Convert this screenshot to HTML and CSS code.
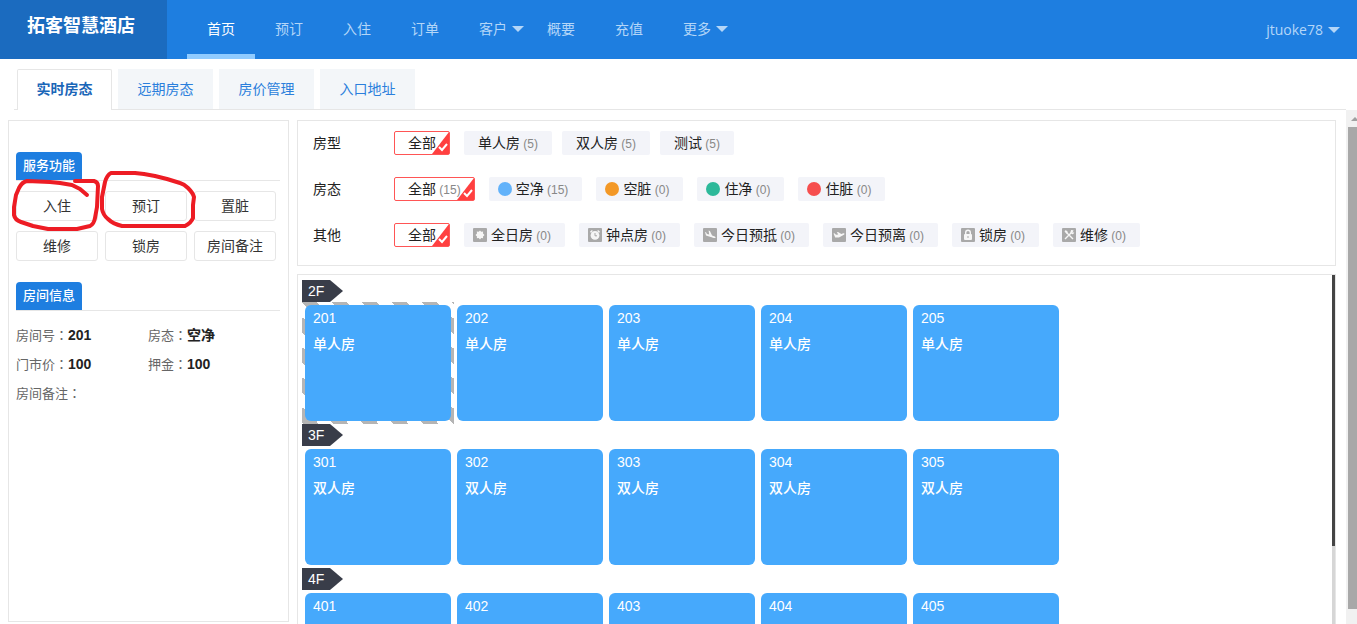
FILE: index.html
```html
<!DOCTYPE html>
<html lang="zh-CN">
<head>
<meta charset="utf-8">
<title>拓客智慧酒店</title>
<link rel="stylesheet" href="styles.css">
</head>
<body>
<header class="topbar">
  <h1 class="brand">拓客智慧酒店</h1>
  <nav class="nav">
    <a class="nav-item active" href="#">首页</a>
    <a class="nav-item" href="#">预订</a>
    <a class="nav-item" href="#">入住</a>
    <a class="nav-item" href="#">订单</a>
    <a class="nav-item has-menu" href="#">客户<span class="caret"></span></a>
    <a class="nav-item" href="#">概要</a>
    <a class="nav-item" href="#">充值</a>
    <a class="nav-item has-menu" href="#">更多<span class="caret"></span></a>
  </nav>
  <a class="user" href="#">jtuoke78<span class="caret"></span></a>
</header>

<nav class="tabs">
  <a class="tab active" href="#">实时房态</a>
  <a class="tab" href="#">远期房态</a>
  <a class="tab" href="#">房价管理</a>
  <a class="tab" href="#">入口地址</a>
</nav>

<div class="page">
  <aside class="sidebar">
    <section>
      <div class="section-head"><h2>服务功能</h2></div>
      <div class="actions">
        <button>入住</button>
        <button>预订</button>
        <button>置脏</button>
        <button>维修</button>
        <button>锁房</button>
        <button>房间备注</button>
      </div>
    </section>
    <section>
      <div class="section-head"><h2>房间信息</h2></div>
      <div class="info">
        <p>房间号<span class="colon" lang="zh-TW">：</span><b>201</b></p>
        <p>房态<span class="colon" lang="zh-TW">：</span><b>空净</b></p>
        <p>门市价<span class="colon" lang="zh-TW">：</span><b>100</b></p>
        <p>押金<span class="colon" lang="zh-TW">：</span><b>100</b></p>
        <p>房间备注<span class="colon" lang="zh-TW">：</span></p>
      </div>
    </section>
  </aside>

  <main class="content">
    <section class="filters">
      <div class="filter-row types">
        <span class="filter-label">房型</span>
        <div class="chips">
          <button class="chip selected">全部<svg class="tick" viewBox="0 0 17 22"><path class="corner" d="M17 0V22H0Z"/><path class="mark" d="M7 15l3 3 5-6"/></svg></button>
          <button class="chip">单人房<small> (5)</small></button>
          <button class="chip">双人房<small> (5)</small></button>
          <button class="chip">测试<small> (5)</small></button>
        </div>
      </div>
      <div class="filter-row">
        <span class="filter-label">房态</span>
        <div class="chips">
          <button class="chip selected">全部<small> (15)</small><svg class="tick" viewBox="0 0 17 22"><path class="corner" d="M17 0V22H0Z"/><path class="mark" d="M7 15l3 3 5-6"/></svg></button>
          <button class="chip with-icon"><i class="dot blue"></i><span>空净<small> (15)</small></span></button>
          <button class="chip with-icon"><i class="dot orange"></i><span>空脏<small> (0)</small></span></button>
          <button class="chip with-icon"><i class="dot green"></i><span>住净<small> (0)</small></span></button>
          <button class="chip with-icon"><i class="dot red"></i><span>住脏<small> (0)</small></span></button>
        </div>
      </div>
      <div class="filter-row">
        <span class="filter-label">其他</span>
        <div class="chips">
          <button class="chip selected">全部<svg class="tick" viewBox="0 0 17 22"><path class="corner" d="M17 0V22H0Z"/><path class="mark" d="M7 15l3 3 5-6"/></svg></button>
          <button class="chip with-icon"><svg class="icon" viewBox="0 0 14 14"><rect width="14" height="14" rx="1"/><path class="w" d="M7 2.500l1.200 1.300 1.900-.2-.1 1.900L11.500 7l-1.500 1.400.1 1.900-1.900-.2L7 11.500l-1.300-1.400-1.900.2.2-1.900L2.500 7l1.500-1.500-.2-1.900 1.900.2z"/></svg><span>全日房<small> (0)</small></span></button>
          <button class="chip with-icon"><svg class="icon" viewBox="0 0 14 14"><rect width="14" height="14" rx="1"/><circle class="w" cx="7" cy="7.4" r="4.4"/><path class="wl" d="M2.400 4.200l2-1.800M11.600 4.200l-2-1.800"/><path class="gl" d="M7 5v2.800h2"/></svg><span>钟点房<small> (0)</small></span></button>
          <button class="chip with-icon"><svg class="icon" viewBox="0 0 14 14"><rect width="14" height="14" rx="1"/><path class="w" d="M2 4l1 .3 1 1.600 2.200.7L5.600 2.600l1.300.4 2.200 4.400 2.700 1c1 .5 1.100 1.700-.1 1.700-.9 0-2.700-.6-4-1L3 7.500z"/></svg><span>今日预抵<small> (0)</small></span></button>
          <button class="chip with-icon"><svg class="icon" viewBox="0 0 14 14"><rect width="14" height="14" rx="1"/><path class="w" d="M1.500 5.500l1-.2 1.500 1.500 2.300-.3L4.800 4.200l1.300-.2 3.200 2 2-.8c1.300-.3 1.800.9.6 1.500L7 9.400H3.200z"/></svg><span>今日预离<small> (0)</small></span></button>
          <button class="chip with-icon"><svg class="icon" viewBox="0 0 14 14"><rect width="14" height="14" rx="1"/><rect class="w" x="3" y="6" width="8" height="6" rx="1"/><path class="wl" d="M4.700 6V4.500a2.300 2.300 0 0 1 4.600 0V6"/><path class="gl" d="M7 8v2"/></svg><span>锁房<small> (0)</small></span></button>
          <button class="chip with-icon"><svg class="icon" viewBox="0 0 14 14"><rect width="14" height="14" rx="1"/><path class="wl" d="M4 4l7 7M10.500 3.500L3 11"/><path class="w" d="M2.500 3.200l.9-.9 1.900.7.4 1.900-1.200.8zM9 2.300c1-.4 2-.1 2.700.5L10.300 4.200l.4.700 1.400-.8c.2 1.300-.7 2.300-2.100 2.100L8.300 4.500z"/></svg><span>维修<small> (0)</small></span></button>
        </div>
      </div>
    </section>

    <section class="rooms">
      <div class="floors">
        <h3 class="floor">2F</h3>
        <div class="floor-rooms">
          <div class="cell selected"><button class="room">201<br>单人房</button></div>
          <div class="cell"><button class="room">202<br>单人房</button></div>
          <div class="cell"><button class="room">203<br>单人房</button></div>
          <div class="cell"><button class="room">204<br>单人房</button></div>
          <div class="cell"><button class="room">205<br>单人房</button></div>
        </div>
        <h3 class="floor">3F</h3>
        <div class="floor-rooms">
          <div class="cell"><button class="room">301<br>双人房</button></div>
          <div class="cell"><button class="room">302<br>双人房</button></div>
          <div class="cell"><button class="room">303<br>双人房</button></div>
          <div class="cell"><button class="room">304<br>双人房</button></div>
          <div class="cell"><button class="room">305<br>双人房</button></div>
        </div>
        <h3 class="floor">4F</h3>
        <div class="floor-rooms">
          <div class="cell"><button class="room">401</button></div>
          <div class="cell"><button class="room">402</button></div>
          <div class="cell"><button class="room">403</button></div>
          <div class="cell"><button class="room">404</button></div>
          <div class="cell"><button class="room">405</button></div>
        </div>
      </div>
      <div class="list-scroll"><div class="list-thumb"></div></div>
    </section>
  </main>

  <div class="page-scroll">
    <svg class="scroll-arrow" viewBox="0 0 8 4"><path d="M4 0L8 4H0Z"/></svg>
    <div class="page-thumb"></div>
  </div>
</div>

<svg class="marks" width="200" height="240" viewBox="0 0 200 240">
  <path d="M87 195L80 189L72 185L60 183L50 182L27 181Q22 182 19 188L16 195L14 207V215Q15 220 21 222L33 226L48 229H77L90 226Q94 224 95 218L97 207L98 186Q98 182 94 181H75"/>
  <path d="M144 174L135 173H111Q107 175 105 182L102 197V209Q103 215 108 219Q113 224 122 226H185Q191 223 193 218L193 205L194 197Q193 193 188 188Q184 184 180 183L167 179L155 176Z"/>
</svg>
</body>
</html>
```
FILE: styles.css
```css
* { box-sizing: border-box; }

body {
  margin: 0;
  height: 100vh;
  overflow: hidden;
  display: flex;
  flex-direction: column;
  background: #fff;
  color: #222;
  font: 14px/24px "Liberation Sans", "Noto Sans CJK SC", sans-serif;
}

h1, h2, h3, p { margin: 0; }
a { text-decoration: none; }
button { font: inherit; color: inherit; cursor: pointer; }

.topbar {
  flex: none;
  height: 59px;
  display: flex;
  background: #1e7ee0;
}
.brand {
  width: 167px;
  padding-left: 27px;
  background: #1b6bbf;
  color: #fff;
  font-size: 18px;
  line-height: 52px;
}
.nav { display: flex; padding-left: 20px; }
.nav-item {
  padding: 4px 20px 0;
  border-bottom: 5px solid transparent;
  color: #b4d6f8;
  line-height: 50px;
}
.nav-item.active { color: #fff; border-color: #90cbff; }
.has-menu {
  display: flex;
  align-items: center;
  gap: 5px;
  padding-right: 3px;
}
.caret {
  border: 6px solid transparent;
  border-top-color: #b4d6f8;
  border-bottom: 0;
}
.user {
  margin-left: auto;
  padding-right: 17px;
  display: flex;
  align-items: center;
  gap: 5px;
  color: #b4d6f8;
  font-family: "Open Sans", sans-serif;
  line-height: 58px;
}

.tabs {
  flex: none;
  display: flex;
  gap: 6px;
  margin: 10px 11px 0 14px;
  padding-left: 3px;
  border-bottom: 1px solid #e6e6e6;
}
.tab {
  min-width: 95px;
  height: 40px;
  line-height: 40px;
  text-align: center;
  background: #f3f6f9;
  color: #2b7fdc;
}
.tab.active {
  height: 41px;
  margin-bottom: -1px;
  line-height: 38px;
  border: 1px solid #e6e6e6;
  border-bottom: 0;
  border-radius: 2px 2px 0 0;
  background: #fff;
  color: #1b66b8;
  font-weight: bold;
}

.page {
  flex: 1;
  min-height: 0;
  display: flex;
  padding-left: 8px;
}

.sidebar {
  flex: none;
  width: 281px;
  margin: 10px 8px 2px 0;
  padding: 31px 8px 0 7px;
  border: 1px solid #e6e6e6;
}
.section-head {
  display: flex;
  border-bottom: 1px solid #e6e6e6;
}
.section-head h2 {
  padding: 0 7px;
  border-radius: 4px 4px 0 0;
  background: #1e7ee0;
  color: #fff;
  font-size: 13px;
  font-weight: 500;
  line-height: 28px;
}
.actions {
  display: grid;
  grid-template-columns: repeat(3, 1fr);
  gap: 10px 7px;
  padding: 10px 4px 21px 0;
}
.actions button {
  height: 30px;
  padding: 0;
  border: 1px solid #e6e6e6;
  border-radius: 3px;
  background: #fff;
  color: #333;
}
.info {
  display: grid;
  grid-template-columns: 1fr 1fr;
  padding-top: 10px;
  color: #666;
  font-size: 13px;
  line-height: 29px;
}
.info b { color: #222; font-size: 14px; }
.colon { font-family: "Noto Sans CJK TC", sans-serif; line-height: 1; }

.content {
  flex: 1;
  min-width: 0;
  display: flex;
  flex-direction: column;
  gap: 8px;
  margin: 10px 10px 0 0;
}
.filters {
  flex: none;
  display: flex;
  flex-direction: column;
  gap: 22px;
  padding: 10px 15px 18px;
  border: 1px solid #e6e6e6;
}
.filter-row { display: flex; }
.filter-label { flex: none; width: 81px; }
.chips { display: flex; flex-wrap: wrap; gap: 14px; }
.types .chips { gap: 10px; }
.types .selected { margin-right: 4px; }
.chip {
  position: relative;
  height: 24px;
  padding: 0 14px;
  border: 0;
  border-radius: 2px;
  background: #f3f4f9;
  line-height: 24px;
  white-space: nowrap;
}
.chip small { color: #888; font-size: 12px; }
.chip.selected {
  padding: 0 13px;
  border: 1px solid #ff5555;
  background: #fff;
  line-height: 22px;
}
.tick {
  position: absolute;
  right: 0;
  bottom: 0;
  width: 17px;
  height: 22px;
}
.corner { fill: #ff4040; }
.mark { fill: none; stroke: #fff; stroke-width: 2; }
.with-icon {
  display: flex;
  align-items: center;
  gap: 4px;
  padding-left: 9px;
}
.dot { width: 14px; height: 14px; border-radius: 50%; }
.blue { background: #62b2fa; }
.orange { background: #f39826; }
.green { background: #2db99a; }
.red { background: #f64e4e; }
.icon { width: 14px; height: 14px; fill: #a9a9a9; }
.icon .w { fill: #f6f6f6; }
.icon .wl { fill: none; stroke: #f6f6f6; stroke-width: 1.4; }
.icon .gl { fill: none; stroke: #a9a9a9; }

.rooms {
  flex: 1;
  min-height: 0;
  display: flex;
  overflow: hidden;
  border: 1px solid #e6e6e6;
  border-bottom: 0;
}
.floors { flex: 1; padding: 5px 4px 0; }
.floor {
  width: 41px;
  padding-left: 6px;
  background: #393d49;
  clip-path: polygon(0 0, 28px 0, 100% 50%, 28px 100%, 0 100%);
  color: #fff;
  font-size: 14px;
  font-weight: normal;
  line-height: 22px;
}
.floor-rooms { display: flex; flex-wrap: wrap; }
.cell { width: 152px; height: 122px; padding: 3px; }
.cell.selected {
  background: linear-gradient(45deg, #b5b5b5 25%, transparent 25% 50%, #b5b5b5 50% 75%, transparent 75%) 0 0 / 30px 30px;
}
.room {
  width: 100%;
  height: 100%;
  display: block;
  padding: 0 8px 64px;
  border: 0;
  border-radius: 6px;
  background: #46a9fc;
  color: #fff;
  font-weight: 500;
  line-height: 26px;
  text-align: left;
}
.floor-rooms:last-child .room { padding-bottom: 90px; }
.list-scroll { width: 3px; background: #d6d6d6; }
.list-thumb { height: 271px; background: #444; }

.page-scroll {
  flex: none;
  width: 11px;
  padding: 7px 0 0 2px;
  overflow: hidden;
  background: #f1f1f1;
}
.scroll-arrow {
  display: block;
  width: 8px;
  height: 4px;
  margin: 0 0 6px 3px;
  fill: #a0a0a0;
}
.page-thumb { height: 482px; background: #a8a8a8; }

.marks {
  position: absolute;
  top: 0;
  left: 0;
  pointer-events: none;
  fill: none;
  stroke: #ed1c24;
  stroke-width: 4;
  stroke-linecap: round;
  stroke-linejoin: round;
}
```
